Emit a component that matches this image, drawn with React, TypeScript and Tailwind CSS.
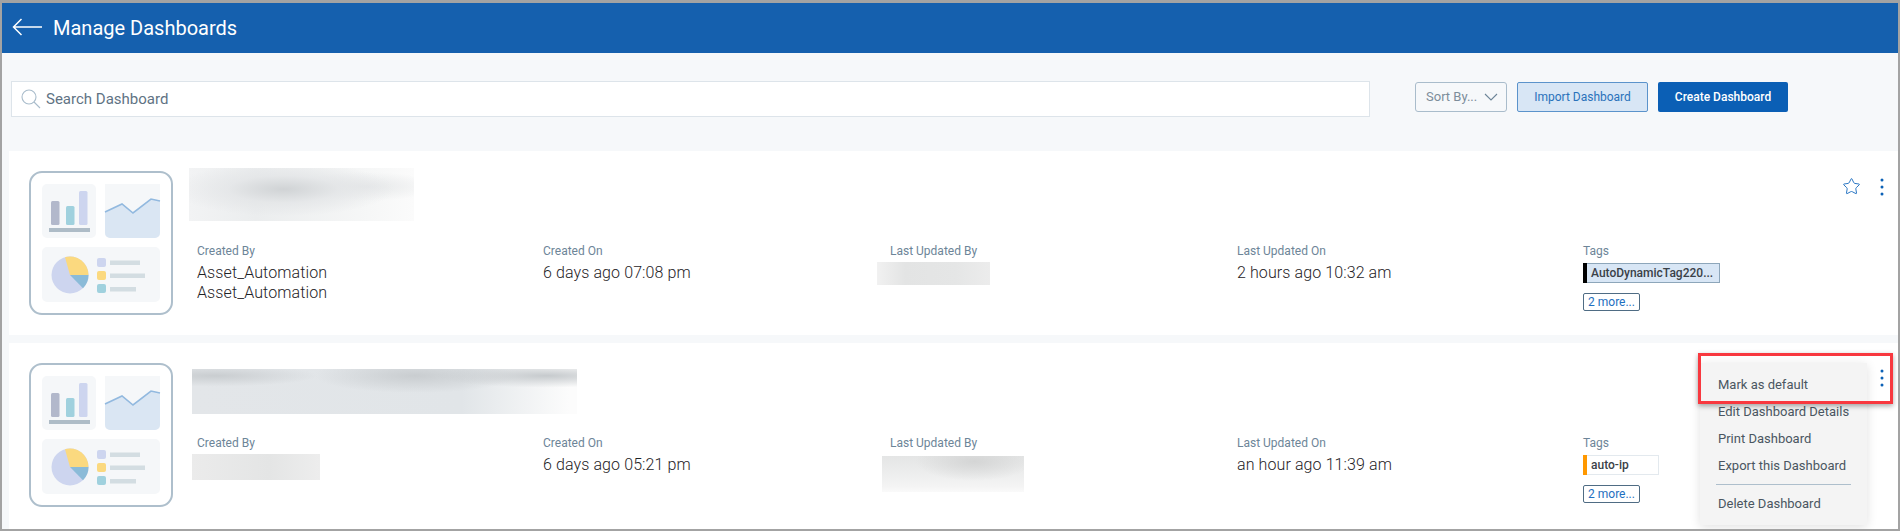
import { Star } from 'lucide-react';

const Thumbnail = () => (
  <svg width="144" height="144" viewBox="0 0 144 144" className="shrink-0">
    <rect x="1" y="1" width="142" height="142" rx="12" fill="#fff" stroke="#aebfcc" strokeWidth="2" />
    <rect x="13" y="13" width="54" height="54" rx="5" fill="#f5f7f9" />
    <rect x="22" y="30" width="8.5" height="24" rx="1.5" fill="#b2b8cb" />
    <rect x="37" y="35" width="8.5" height="19" rx="1.5" fill="#a0d1de" />
    <rect x="50" y="20" width="8.5" height="34" rx="1.5" fill="#cdd5ef" />
    <rect x="20" y="57" width="41" height="4" fill="#aebcc7" />
    <path d="M76 13h55v49a5 5 0 0 1-5 5H81a5 5 0 0 1-5-5z" fill="#f5f7f9" />
    <path d="M76 41L93 33L104 42L122 28L131 30V62a5 5 0 0 1-5 5H81a5 5 0 0 1-5-5z" fill="#dae6f3" />
    <path d="M76 41L93 33L104 42L122 28L131 30" fill="none" stroke="#92b9df" strokeWidth="1.6" />
    <rect x="13" y="76" width="118" height="55" rx="5" fill="#f5f7f9" />
    <circle cx="41" cy="104" r="18.5" fill="#cdd5ef" />
    <path d="M41 104L36 86.2A18.5 18.5 0 0 1 59.5 104z" fill="#fbd97f" />
    <path d="M41 104H59.5A18.5 18.5 0 0 1 54 117.2z" fill="#8bbbd8" />
    <rect x="68" y="87" width="9" height="9" rx="2" fill="#cdd5ef" />
    <rect x="68" y="100" width="9" height="9" rx="2" fill="#fbd97f" />
    <rect x="68" y="113" width="9" height="9" rx="2" fill="#a0d1de" />
    <rect x="81" y="89.5" width="30" height="4.5" fill="#d3dde2" />
    <rect x="81" y="102.5" width="35" height="4.5" fill="#d3dde2" />
    <rect x="81" y="116" width="26" height="4.5" fill="#d3dde2" />
  </svg>
);

const Kebab = () => (
  <svg width="4" height="18" viewBox="0 0 4 18" className="shrink-0">
    <circle cx="2" cy="2" r="1.5" fill="#0b61b6" />
    <circle cx="2" cy="9" r="1.5" fill="#0b61b6" />
    <circle cx="2" cy="16" r="1.5" fill="#0b61b6" />
  </svg>
);

const Label = ({ children }: { children: string }) => (
  <div className="text-[12px] leading-[16px] text-[#6d8598]">{children}</div>
);

const Value = ({ children }: { children: React.ReactNode }) => (
  <div className="mt-[4px] text-[16px] font-light leading-[20px] tracking-[0.1px] text-[#1f2327]">{children}</div>
);

const Tags = ({ tag, bar, chip }: { tag: string; bar: string; chip: string }) => (
  <div className="flex flex-col items-start">
    <Label>Tags</Label>
    <div className={`mt-[4px] flex h-[20px] ${chip}`}>
      <span className={`w-[4px] shrink-0 -ml-px -my-px ${bar}`} />
      <span className="pl-[4px] text-[12px] font-medium leading-[18px] text-[#3a4148]">{tag}</span>
    </div>
    <div className="mt-[10px] flex h-[18px] w-[57px] items-center justify-center rounded-[2px] border border-[#4f6c84] text-[12px] text-[#1f6fc0]">
      2 more...
    </div>
  </div>
);

export default function App() {
  return (
    <div className="relative h-[531px] w-[1900px] overflow-hidden border-x-2 border-t-[3px] border-b-2 border-[#a3a3a3] bg-[#f6f8fa] font-['Roboto',sans-serif]">
      <div className="flex h-[50px] items-center bg-[#1560ae] pl-[10px]">
        <svg width="31" height="20" viewBox="0 0 31 20" fill="none" stroke="#fff" strokeWidth="1.5">
          <path d="M30 9H1.5M9.5 1L1.5 9l8 8" />
        </svg>
        <span className="ml-[10px] text-[20px] leading-[28px] text-white">Manage Dashboards</span>
      </div>

      <div className="flex h-[98px] items-start pl-[9px] pt-[28px]">
        <div className="flex h-[36px] w-[1359px] items-center border border-[#dde4ea] bg-white pl-[9px]">
          <svg width="20" height="20" viewBox="0 0 20 20" fill="none" stroke="#a9bccb" strokeWidth="1.1">
            <circle cx="8" cy="8" r="7" />
            <path d="M13 13l6 6" />
          </svg>
          <span className="ml-[5px] text-[15px] text-[#5f7384]">Search Dashboard</span>
        </div>
        <div className="ml-[45px] mt-px flex h-[30px] w-[92px] items-center justify-between rounded-[3px] border border-[#a9bccb] pl-[10px] pr-[8px] text-[13px] text-[#7d8d9a]">
          Sort By...
          <svg width="14" height="8" viewBox="0 0 14 8" fill="none" stroke="#6d8598" strokeWidth="1.1">
            <path d="M1 1l6 6 6-6" />
          </svg>
        </div>
        <div className="ml-[10px] mt-px flex h-[30px] w-[131px] items-center justify-center rounded-[2px] border border-[#5b93cb] bg-[#d8e6f5] text-[12px] text-[#2a72bb]">
          Import Dashboard
        </div>
        <div className="ml-[10px] mt-px flex h-[30px] w-[130px] items-center justify-center rounded-[2px] bg-[#0b5fb5] text-[12px] font-medium text-white">
          Create Dashboard
        </div>
      </div>

      <div className="ml-[7px] flex flex-col gap-[8px]">
        <div className="relative flex h-[184px] items-start bg-white pl-[20px] pt-[20px]">
          <Thumbnail />
          <div className="-mt-[20px] ml-[16px] flex-1">
            <div className="h-[92px] pt-[17px]">
              <div className="h-[53px] w-[225px] bg-[radial-gradient(ellipse_at_42%_40%,#d0d3d5_0%,rgba(226,228,230,0.7)_30%,transparent_60%),radial-gradient(ellipse_at_78%_35%,#e6e8e9_0%,transparent_30%),linear-gradient(90deg,#f2f3f4,#ebedee_30%,#f6f7f7_80%,#fbfbfb)]" />
            </div>
            <div className="ml-[8px] grid grid-cols-[346px_347px_347px_346px_1fr]">
              <div>
                <Label>Created By</Label>
                <Value>
                  Asset_Automation
                  <br />
                  Asset_Automation
                </Value>
              </div>
              <div>
                <Label>Created On</Label>
                <Value>6 days ago 07:08 pm</Value>
              </div>
              <div>
                <Label>Last Updated By</Label>
                <div className="-ml-[13px] mt-[3px] h-[23px] w-[113px] bg-[linear-gradient(90deg,#f1f1f1,#e3e4e4_25%,#e5e6e6_70%,#ececec)]" />
              </div>
              <div>
                <Label>Last Updated On</Label>
                <Value>2 hours ago 10:32 am</Value>
              </div>
              <Tags tag="AutoDynamicTag220..." bar="bg-black" chip="w-[137px] border border-[#8da6ba] bg-[#d8e6f5]" />
            </div>
          </div>
          <div className="absolute right-[14px] top-[26px] flex items-center gap-[19px]">
            <Star size={19} strokeWidth={1.2} color="#1f6fc0" />
            <Kebab />
          </div>
        </div>

        <div className="relative flex h-[186px] items-start bg-white pl-[20px] pt-[20px]">
          <Thumbnail />
          <div className="-mt-[20px] ml-[16px] flex-1">
            <div className="h-[92px] pt-[26px]">
              <div className="ml-[3px] h-[45px] w-[385px] bg-[radial-gradient(ellipse_at_92%_15%,#c6cacd_0%,transparent_22%),radial-gradient(ellipse_at_58%_15%,#c9cdd0_0%,transparent_32%),radial-gradient(ellipse_at_6%_15%,#c9cdd0_0%,transparent_20%),linear-gradient(90deg,#e3e6e9,#e1e5e8_70%,#fcfcfc_98%)]" />
            </div>
            <div className="ml-[8px] grid grid-cols-[346px_347px_347px_346px_1fr]">
              <div>
                <Label>Created By</Label>
                <div className="-ml-[5px] mt-[3px] h-[26px] w-[128px] bg-[linear-gradient(90deg,#ebebeb,#e4e5e5_60%,#ededed)]" />
              </div>
              <div>
                <Label>Created On</Label>
                <Value>6 days ago 05:21 pm</Value>
              </div>
              <div>
                <Label>Last Updated By</Label>
                <div className="-ml-[8px] mt-[5px] h-[36px] w-[142px] bg-[radial-gradient(ellipse_at_65%_15%,#d4d5d5_0%,transparent_45%),linear-gradient(180deg,#e4e5e5,#f4f4f4_85%,#fafafa)]" />
              </div>
              <div>
                <Label>Last Updated On</Label>
                <Value>an hour ago 11:39 am</Value>
              </div>
              <Tags tag="auto-ip" bar="bg-[#ff9800]" chip="w-[76px] border border-[#e3e9ee] bg-white" />
            </div>
          </div>

          <div className="absolute left-[1691px] top-[20px] w-[167px] whitespace-nowrap bg-[#f4f4f4] py-[8px] text-[13px] leading-[27px] text-[#4a5661] shadow-[0_2px_10px_rgba(0,0,0,0.12)]">
            <div className="pl-[18px]">Mark as default</div>
            <div className="pl-[18px]">Edit Dashboard Details</div>
            <div className="pl-[18px]">Print Dashboard</div>
            <div className="pl-[18px]">Export this Dashboard</div>
            <div className="mx-[16px] my-[5px] h-px bg-[#aebfcc]" />
            <div className="pl-[18px]">Delete Dashboard</div>
          </div>
          <div className="absolute right-[14px] top-[26px]">
            <Kebab />
          </div>
          <div className="absolute left-[1689px] top-[10px] h-[51px] w-[195px] border-[3px] border-[#f8383f] shadow-[0_2px_5px_rgba(0,0,0,0.35)]" />
        </div>
      </div>
    </div>
  );
}
